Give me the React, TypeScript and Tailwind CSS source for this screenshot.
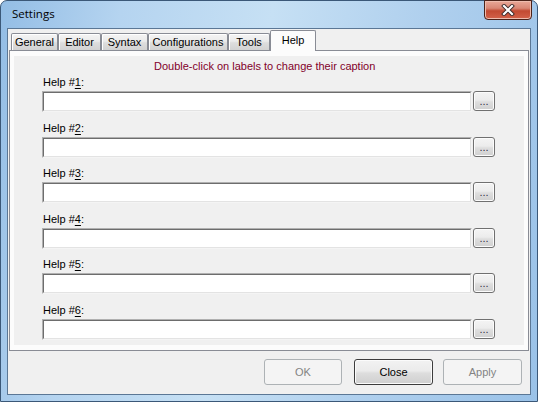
import React from "react";

const tahoma = "font-['Liberation_Sans',Arial,sans-serif]";

function TabItem({ label, w, selected }: { label: string; w: string; selected?: boolean }) {
  if (selected) {
    return (
      <div
        className={`${w} h-[21px] mb-[-1px] relative z-10 bg-[#fcfcfc] border border-b-0 border-[#898c95] rounded-t-[2px] flex items-start justify-center pt-[3px] text-[11px] leading-[13px] text-black`}
      >
        {label}
      </div>
    );
  }
  return (
    <div
      className={`${w} h-[17px] border border-b-0 border-[#898c95] rounded-t-[2px] bg-[linear-gradient(to_bottom,#f4f4f4,#ebebeb_45%,#dddddd_55%,#d2d2d2)] shadow-[inset_1px_1px_0_#ffffff] flex items-center justify-center text-[11px] leading-[13px] text-black`}
    >
      {label}
    </div>
  );
}

function Row({ n, h }: { n: number; h: string }) {
  return (
    <div className={`${h} flex flex-col`}>
      <div className="h-[14px] leading-[14px] pl-[29px] text-[11px] text-black">
        Help #<span className="underline underline-offset-2">{n}</span>:
      </div>
      <div className="mt-[2px] pl-[28px] flex items-start gap-[1px]">
        <div className="w-[430px] h-[21px] border border-t-[#b0b0b0] border-l-[#b0b0b0] border-b-[#f4f4f4] border-r-[#f4f4f4]">
          <div className="w-full h-full bg-white border border-t-[#6d6d6d] border-l-[#6d6d6d] border-b-[#e3e3e3] border-r-[#e3e3e3]" />
        </div>
        <div className="w-[22px] h-[20px] rounded-[3px] border border-[#707070] bg-[linear-gradient(to_bottom,#f4f4f4,#ececec_45%,#dedede_55%,#d0d0d0)] shadow-[inset_0_0_0_1px_#fcfcfc] flex items-end justify-center pb-[4px] text-[11px] leading-[10px] text-[#334]">
          ...
        </div>
      </div>
    </div>
  );
}

function DlgButton({ label, w, disabled, isDefault }: { label: string; w: string; disabled?: boolean; isDefault?: boolean }) {
  if (disabled) {
    return (
      <div className={`${w} h-[26px] rounded-[3px] border border-[#adb2b5] bg-[#f4f4f4] flex items-center justify-center text-[11px] text-[#838383]`}>
        {label}
      </div>
    );
  }
  return (
    <div
      className={`${w} h-[26px] rounded-[3px] border ${isDefault ? "border-[#3c3c3c]" : "border-[#707070]"} bg-[linear-gradient(to_bottom,#f2f2f2,#ebebeb_45%,#dddddd_55%,#cfcfcf)] shadow-[inset_0_0_0_1px_#fbfbfb] flex items-center justify-center text-[11px] text-black`}
    >
      {label}
    </div>
  );
}

export default function App() {
  const heights = ["h-[46px]", "h-[45px]", "h-[46px]", "h-[45px]", "h-[46px]", "h-[35px]"];
  return (
    <div className={`w-[538px] h-[402px] overflow-hidden bg-white ${tahoma}`}>
      <div className="relative w-full h-full rounded-t-[7px] border border-[#3b5878] bg-[linear-gradient(100deg,#93bde5,#b5d4f0_20%,#c6e0f4_45%,#b0d0ee_70%,#9ac2e8)] flex flex-col">
        {/* title bar */}
        <div className="h-[27px] shrink-0 flex items-center pl-[11px] pb-[1px]">
          <span className="font-['Open_Sans',sans-serif] text-[11.5px] text-black">Settings</span>
        </div>
        {/* close button */}
        <div className="absolute top-[-1px] right-[5px] w-[48px] h-[20px] rounded-b-[4px] border border-[#4b2219] bg-[linear-gradient(to_bottom,#e9a898,#d98775_40%,#c24a32_55%,#d3624a)] shadow-[inset_0_0_0_1px_#eebcae] flex items-center justify-center">
          <svg width="14" height="12" viewBox="0 0 14 12">
            <path d="M3 2 L11 10 M11 2 L3 10" stroke="#3a2a2a" strokeWidth="4" strokeLinecap="square" />
            <path d="M3 2 L11 10 M11 2 L3 10" stroke="#ffffff" strokeWidth="2.2" strokeLinecap="square" />
          </svg>
        </div>
        {/* client area */}
        <div className="mx-[6px] mb-[6px] h-[367px] border border-[#5b7795] bg-[#f0f0f0] flex flex-col">
          {/* tab strip */}
          <div className="h-[21px] pl-[3px] flex items-end">
            <TabItem label="General" w="w-[47px]" />
            <TabItem label="Editor" w="w-[43px]" />
            <TabItem label="Syntax" w="w-[47px]" />
            <TabItem label="Configurations" w="w-[80px]" />
            <TabItem label="Tools" w="w-[42px]" />
            <TabItem label="Help" w="w-[46px]" selected />
          </div>
          {/* sheet */}
          <div className="mx-[1px] h-[301px] border border-[#898c95] bg-[#fcfcfc] px-[4px] py-[5px]">
            <div className="h-full bg-[#f0f0f0] pt-[3px] flex flex-col">
              <div className="h-[14px] leading-[14px] pl-[140px] text-[11px] text-[#82002a]">
                Double-click on labels to change their caption
              </div>
              <div className="mt-[2px] flex flex-col">
                {[1, 2, 3, 4, 5, 6].map((n, i) => (
                  <Row key={n} n={n} h={heights[i]} />
                ))}
              </div>
            </div>
          </div>
          {/* buttons */}
          <div className="flex-1 flex justify-end items-start pt-[8px] pr-[8px]">
            <DlgButton label="OK" w="w-[78px]" disabled />
            <div className="w-[12px]" />
            <DlgButton label="Close" w="w-[79px]" isDefault />
            <div className="w-[10px]" />
            <DlgButton label="Apply" w="w-[79px]" disabled />
          </div>
        </div>
      </div>
    </div>
  );
}
